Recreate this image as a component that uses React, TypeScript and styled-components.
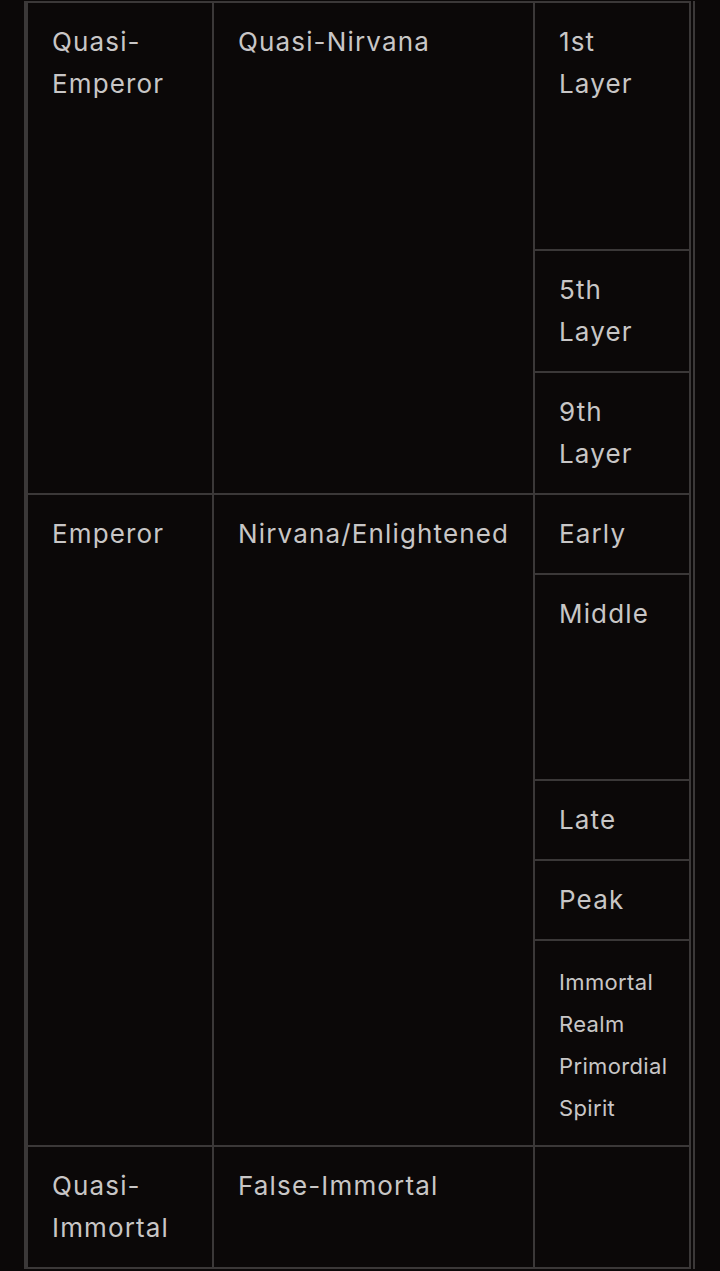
import React from "react";
import styled, { createGlobalStyle } from "styled-components";

const GlobalStyle = createGlobalStyle`
  html, body {
    margin: 0;
    padding: 0;
    background: #0b0808;
  }
  body {
    font-family: Inter, "Noto Sans", sans-serif;
    color: #c8c6c6;
  }
`;

const border = "#3b3838";

interface Realm {
  major: React.ReactNode;
  alt: React.ReactNode;
  rows: number;
  stages: { label: React.ReactNode; small?: boolean }[];
}

const realms: Realm[] = [
  {
    major: (
      <>
        Quasi-
        <br />
        Emperor
      </>
    ),
    alt: "Quasi-Nirvana",
    rows: 3,
    stages: [
      { label: <>1st<br />Layer</> },
      { label: <>5th<br />Layer</> },
      { label: <>9th<br />Layer</> },
    ],
  },
  {
    major: "Emperor",
    alt: "Nirvana/Enlightened",
    rows: 5,
    stages: [
      { label: "Early" },
      { label: "Middle" },
      { label: "Late" },
      { label: "Peak" },
      {
        label: (
          <>
            Immortal
            <br />
            Realm
            <br />
            Primordial
            <br />
            Spirit
          </>
        ),
        small: true,
      },
    ],
  },
  {
    major: (
      <>
        Quasi-
        <br />
        Immortal
      </>
    ),
    alt: "False-Immortal",
    rows: 1,
    stages: [{ label: "" }],
  },
];

export default function App() {
  return (
    <>
      <GlobalStyle />
      <Page>
        <Frame>
          <Table>
            {realms.map((realm, i) => (
              <React.Fragment key={i}>
                <Cell $col={1} $span={realm.rows}>
                  {realm.major}
                </Cell>
                <Cell $col={2} $span={realm.rows}>
                  {realm.alt}
                </Cell>
                {realm.stages.map((stage, j) => (
                  <Cell key={j} $col={3} $span={1} $small={stage.small}>
                    {stage.label}
                  </Cell>
                ))}
              </React.Fragment>
            ))}
          </Table>
        </Frame>
      </Page>
    </>
  );
}

const Page = styled.div`
  min-height: 1271px;
  padding-top: 1px;
  box-sizing: border-box;
  overflow: hidden;
`;

const Frame = styled.div`
  margin-left: 24px;
  width: 671px;
  box-sizing: border-box;
  border-left: 2px solid ${border};
  border-right: 2px solid ${border};
  padding-right: 2px;
`;

const Table = styled.div`
  display: grid;
  grid-template-columns: 186px 321px 156px;
  grid-template-rows: 248px 122px 122px 80px 206px 80px 80px 206px 122px;
  border-top: 2px solid ${border};
  border-left: 2px solid ${border};
`;

const Cell = styled.div<{ $col: number; $span: number; $small?: boolean }>`
  grid-column: ${(p) => p.$col};
  grid-row: span ${(p) => p.$span};
  box-sizing: border-box;
  padding: ${(p) => (p.$small ? "20px" : "18px")} 10px 0 24px;
  border-right: 2px solid ${border};
  border-bottom: 2px solid ${border};
  font-size: ${(p) => (p.$small ? "22px" : "26px")};
  line-height: 42px;
  white-space: nowrap;
  letter-spacing: ${(p) => (p.$small ? "0.35px" : "1.15px")};
`;
